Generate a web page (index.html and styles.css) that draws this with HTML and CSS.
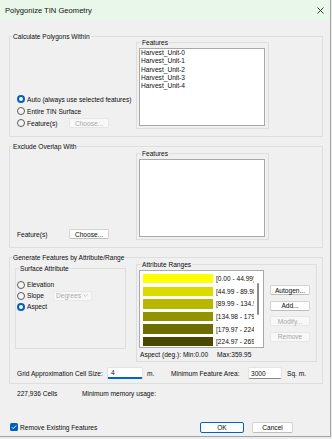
FILE: index.html
```html
<!DOCTYPE html>
<html>
<head>
<meta charset="utf-8">
<title>Polygonize TIN Geometry</title>
<link rel="stylesheet" href="styles.css">
</head>
<body>
<div class="window">
  <div class="titlebar">
    <span class="title">Polygonize TIN Geometry</span>
    <svg class="close" width="7" height="7" viewBox="0 0 7 7"><path d="M0.5 0.5 L6.5 6.5 M6.5 0.5 L0.5 6.5" stroke="#222" stroke-width="0.9" fill="none"/></svg>
  </div>
  <div class="content">
    <fieldset class="group g1">
      <legend>Calculate Polygons Within</legend>
      <div class="gbody gbody-1">
        <div class="leftcol">
          <div class="row"><span class="radio checked"></span><span>Auto (always use selected features)</span></div>
          <div class="row"><span class="radio"></span><span>Entire TIN Surface</span></div>
          <div class="row"><span class="radio"></span><span class="lbl-radio-feat">Feature(s)</span><span class="btn disabled choose">Choose...</span></div>
        </div>
        <fieldset class="sub features">
          <legend>Features</legend>
          <div class="listbox flist">
            <div class="item">Harvest_Unit-0</div>
            <div class="item">Harvest_Unit-1</div>
            <div class="item">Harvest_Unit-2</div>
            <div class="item">Harvest_Unit-3</div>
            <div class="item">Harvest_Unit-4</div>
          </div>
        </fieldset>
      </div>
    </fieldset>

    <fieldset class="group g2">
      <legend>Exclude Overlap With</legend>
      <div class="gbody gbody-2">
        <div class="leftcol">
          <div class="row"><span class="lbl-feat">Feature(s)</span><span class="btn choose">Choose...</span></div>
        </div>
        <fieldset class="sub features">
          <legend>Features</legend>
          <div class="listbox flist"></div>
        </fieldset>
      </div>
    </fieldset>

    <fieldset class="group g3">
      <legend>Generate Features by Attribute/Range</legend>
      <div class="g3-top">
        <fieldset class="sub surface">
          <legend>Surface Attribute</legend>
          <div class="srows">
            <div class="srow"><span class="radio"></span><span>Elevation</span></div>
            <div class="srow"><span class="radio"></span><span class="lbl-slope">Slope</span>
              <span class="dropdown">Degrees<svg class="chev" width="5" height="3" viewBox="0 0 5 3"><path d="M0.3 0.4 L2.5 2.5 L4.7 0.4" stroke="#b5b5b5" stroke-width="0.7" fill="none"/></svg></span>
            </div>
            <div class="srow"><span class="radio checked"></span><span>Aspect</span></div>
          </div>
        </fieldset>
        <fieldset class="sub ranges">
          <legend>Attribute Ranges</legend>
          <div class="ranges-body">
            <div class="listbox rlist">
              <div class="rrows">
                <div class="rrow"><span class="sw" style="background:#ffff00"></span><span class="rtext">[0.00 - 44.99)</span></div>
                <div class="rrow"><span class="sw" style="background:#dbdb00"></span><span class="rtext">[44.99 - 89.98)</span></div>
                <div class="rrow"><span class="sw" style="background:#b7b700"></span><span class="rtext">[89.99 - 134.98)</span></div>
                <div class="rrow"><span class="sw" style="background:#939300"></span><span class="rtext">[134.98 - 179.97)</span></div>
                <div class="rrow"><span class="sw" style="background:#6e6e00"></span><span class="rtext">[179.97 - 224.97)</span></div>
                <div class="rrow"><span class="sw" style="background:#4a4800"></span><span class="rtext">[224.97 - 269.96)</span></div>
              </div>
              <div class="vscroll"><div class="thumb"></div></div>
            </div>
            <div class="btncol">
              <span class="btn sbtn">Autogen...</span>
              <span class="btn sbtn">Add...</span>
              <span class="btn sbtn disabled">Modify...</span>
              <span class="btn sbtn disabled">Remove</span>
            </div>
          </div>
          <div class="minmax"><span class="mm-l">Aspect (deg.): Min:0.00</span><span>Max:359.95</span></div>
        </fieldset>
      </div>
      <div class="gridrow">
        <span class="lbl-grid">Grid Approximation Cell Size:</span>
        <span class="input focus in-cell">4</span>
        <span class="unit-m">m.</span>
        <span class="lbl-area">Minimum Feature Area:</span>
        <span class="input in-area">3000</span>
        <span class="unit-sq">Sq. m.</span>
      </div>
    </fieldset>

    <div class="inforow"><span class="lbl-cells">227,936 Cells</span><span>Minimum memory usage:</span></div>
  </div>

  <div class="footer">
    <span class="checkbox"><svg width="8" height="8" viewBox="0 0 8 8"><path d="M1.8 4.1 L3.3 5.6 L6.3 2.4" stroke="#fff" stroke-width="0.9" fill="none"/></svg></span>
    <span class="cb-label">Remove Existing Features</span>
    <span class="btn okbtn">OK</span>
    <span class="btn cancelbtn">Cancel</span>
  </div>
</div>
</body>
</html>
```

FILE: styles.css
```css
* { box-sizing: border-box; }
html { background: #ececec; }
body {
  margin: 0;
  font-family: "Liberation Sans", Arial, sans-serif;
  font-size: 6.6px;
  color: #0c0c0c;
}
.window {
  width: 331px;
  height: 437px;
  background: #f0f0f0;
  border-right: 1px solid #a3a3a3;
  border-bottom: 1px solid #a3a3a3;
  display: flex;
  flex-direction: column;
}
.titlebar {
  height: 20px;
  flex: none;
  background: #e9f6ea;
  display: flex;
  align-items: center;
  justify-content: space-between;
  padding: 0 6px 0 5px;
}
.title { font-size: 7.6px; color: #111; }

.content { padding: 12px 0 0 9px; }

fieldset {
  margin: 0;
  padding: 0;
  border: 1px solid #dedede;
  min-width: 0;
}
legend {
  padding: 0 1px;
  margin-left: 2px;
  line-height: 9px;
}
.group { width: 314px; }
.g2, .g3 { margin-top: 5px; }

.gbody { display: flex; padding: 0 0 7px 7px; }
.gbody-1 { margin-top: -3px; }
.gbody-2 { margin-top: -2px; }

.leftcol {
  width: 119px;
  display: flex;
  flex-direction: column;
  justify-content: flex-end;
}
.row { height: 12px; display: flex; align-items: center; white-space: nowrap; }
.lbl-radio-feat { width: 42px; }
.lbl-feat { width: 52px; }

.radio {
  width: 8px; height: 8px;
  border-radius: 50%;
  border: 1px solid #5a5a5a;
  background: #f6f6f6;
  margin-right: 2px;
  flex: none;
}
.radio.checked { border: 2.5px solid #005fb8; background: #fff; }

.btn {
  display: flex;
  align-items: center;
  justify-content: center;
  height: 11px;
  background: #fdfdfd;
  border: 1px solid #d3d3d3;
  border-bottom-color: #bdbdbd;
  border-radius: 2px;
  color: #0c0c0c;
  flex: none;
}
.btn.disabled {
  background: #f8f8f8;
  border-color: #e6e6e6;
  color: #a5a5a5;
}
.choose { width: 40px; height: 10px; }

.sub.features { width: 133px; padding: 1px 3px 2px 2px; }
.listbox {
  background: #fff;
  border: 1px solid #a9a9a9;
}
.flist { width: 126px; height: 78px; padding-left: 1px; }
.item { line-height: 8.3px; white-space: nowrap; }

/* group 3 */
.g3-top { display: flex; align-items: flex-start; padding-left: 5px; margin-top: -2px; }
.sub.surface { width: 111px; height: 85px; margin-top: 4px; margin-right: 10px; padding: 0 0 0 1px; }
.srows { padding-top: 6px; }
.srow { height: 11px; display: flex; align-items: center; white-space: nowrap; }
.lbl-slope { width: 26px; }
.dropdown {
  width: 39px; height: 10px;
  display: flex; align-items: center; justify-content: space-between;
  padding: 0 3px 0 2px;
  background: #f7f7f7;
  border: 1px solid #e8e8e8;
  border-radius: 2px;
  color: #ababab;
}

.sub.ranges { width: 181px; padding: 0 0 1px 2px; }
.ranges-body { display: flex; margin-top: 1px; }
.rlist { width: 125px; height: 78px; display: flex; }
.rrows { width: 114px; overflow: hidden; padding-top: 1.4px; }
.rrow { height: 12.6px; display: flex; align-items: center; padding-left: 3px; white-space: nowrap; }
.sw { width: 70px; height: 9.4px; flex: none; }
.rtext { margin-left: 3px; }
.vscroll { flex: 1; padding-left: 3px; }
.thumb { width: 2px; height: 32px; margin-top: 11.7px; background: #8a8a8a; border-radius: 1px; }
.btncol { display: flex; flex-direction: column; gap: 5.5px; margin-left: 6px; padding-top: 15px; }
.sbtn { width: 40px; height: 10px; }
.minmax { display: flex; line-height: 10px; margin-top: 2px; padding-left: 1px; white-space: nowrap; }
.mm-l { width: 77px; }

.gridrow {
  display: flex; align-items: center;
  height: 12px; margin-top: 5px; margin-bottom: 4px;
  padding-left: 7px; white-space: nowrap;
}
.lbl-grid { width: 90px; }
.input {
  height: 12px;
  display: flex; align-items: center;
  background: #fff;
  border: 1px solid #e3e3e3;
  border-bottom-color: #8b8b8b;
  border-radius: 2px;
}
.input.focus { border-bottom: 2px solid #0067c0; }
.in-cell { width: 36px; padding-left: 3px; }
.unit-m { margin-left: 4px; width: 24px; }
.lbl-area { width: 77px; }
.in-area { width: 34px; padding-left: 2px; }
.unit-sq { margin-left: 5px; }

.inforow { display: flex; line-height: 10px; margin-top: 5px; padding-left: 8px; white-space: nowrap; }
.lbl-cells { width: 65px; }

.footer {
  margin-top: auto;
  display: flex; align-items: center;
  height: 11px;
  margin-bottom: 3px;
  padding: 0 37px 0 10px;
  white-space: nowrap;
}
.checkbox {
  width: 8px; height: 8px;
  background: #005fb8;
  border-radius: 1.5px;
  display: flex;
  flex: none;
  margin-top: -1px;
}
.cb-label { margin-left: 2px; }
.okbtn { width: 44px; margin-left: auto; border: 1px solid #0067c0; }
.cancelbtn { width: 41px; margin-left: 8px; }
```
